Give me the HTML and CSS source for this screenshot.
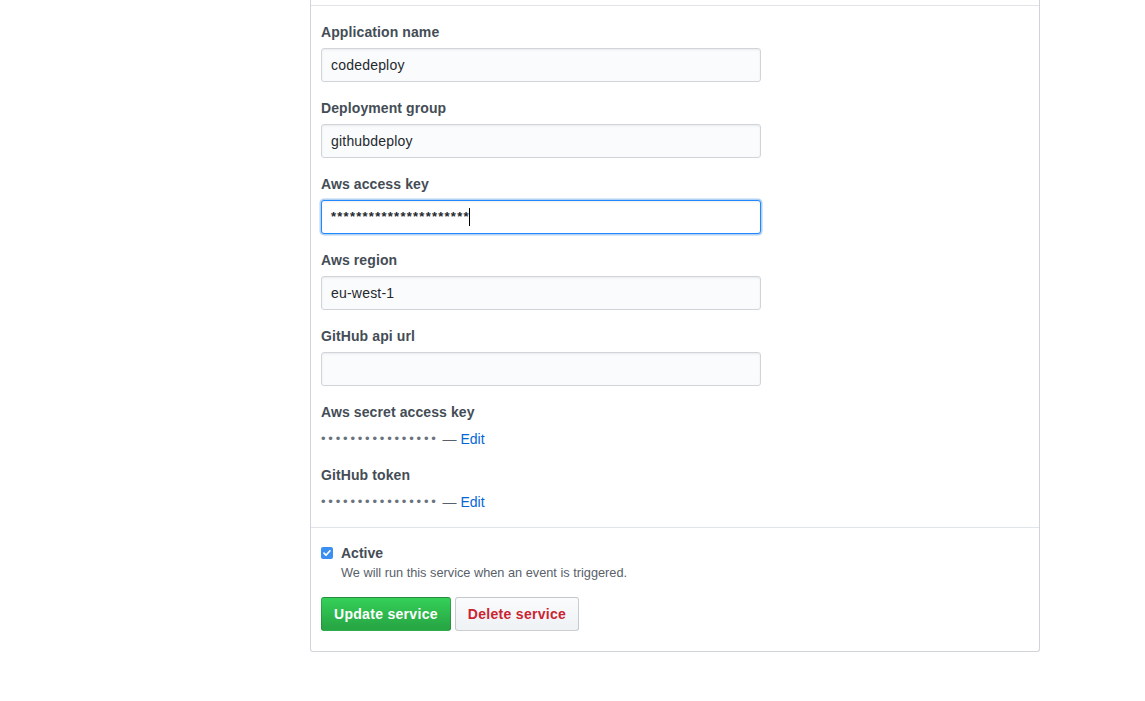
FILE: index.html
```html
<!DOCTYPE html>
<html>
<head>
<meta charset="utf-8">
<link rel="stylesheet" href="styles.css">
</head>
<body>
<div class="page">
  <div class="box">
    <div class="box-top"></div>
    <div class="section fields">
      <div class="group">
        <label class="label">Application name</label>
        <input class="input" type="text" value="codedeploy">
      </div>
      <div class="group">
        <label class="label">Deployment group</label>
        <input class="input" type="text" value="githubdeploy">
      </div>
      <div class="group">
        <label class="label">Aws access key</label>
        <div class="input focused"><span class="stars">**********************</span><span class="caret"></span></div>
      </div>
      <div class="group">
        <label class="label">Aws region</label>
        <input class="input" type="text" value="eu-west-1">
      </div>
      <div class="group">
        <label class="label">GitHub api url</label>
        <input class="input" type="text" value="">
      </div>
      <div class="group">
        <label class="label">Aws secret access key</label>
        <div class="secret"><span class="dots">••••••••••••••••</span> — <a class="edit" href="#">Edit</a></div>
      </div>
      <div class="group">
        <label class="label">GitHub token</label>
        <div class="secret"><span class="dots">••••••••••••••••</span> — <a class="edit" href="#">Edit</a></div>
      </div>
    </div>
    <div class="section footer">
      <div class="check-row">
        <span class="checkbox"><svg viewBox="0 0 12 12" width="12" height="12"><path d="M3 6.2l2 2 4-4.4" fill="none" stroke="#fff" stroke-width="1.7" stroke-linecap="round" stroke-linejoin="round"/></svg></span>
        <div class="check-text">
          <div class="check-label">Active</div>
          <div class="note">We will run this service when an event is triggered.</div>
        </div>
      </div>
      <div class="actions">
        <button class="btn btn-primary">Update service</button>
        <button class="btn btn-danger">Delete service</button>
      </div>
    </div>
  </div>
</div>
</body>
</html>
```
FILE: styles.css
```css
html, body {
  margin: 0;
  padding: 0;
  background: #fff;
}
body {
  font-family: "Liberation Sans", Arial, Helvetica, sans-serif;
  font-size: 14px;
  color: #24292e;
}
.page {
  padding-left: 310px;
}
.box {
  width: 728px;
  border: 1px solid #d1d5da;
  border-top: none;
  border-radius: 0 0 3px 3px;
}
.box-top {
  height: 5px;
}
.section {
  border-top: 1px solid #e1e4e8;
  padding: 0 10px;
}
.fields {
  padding-top: 16px;
  padding-bottom: 15px;
}
.group + .group {
  margin-top: 16px;
}
.label {
  display: block;
  font-weight: bold;
  line-height: 20px;
  color: #444d56;
  margin-bottom: 6px;
  letter-spacing: 0.1px;
}
.input {
  display: block;
  box-sizing: border-box;
  width: 440px;
  height: 34px;
  padding: 0 9px;
  font-family: inherit;
  font-size: 14px;
  line-height: 32px;
  color: #24292e;
  background: #fafbfc;
  border: 1px solid #d1d5da;
  border-radius: 3px;
  box-shadow: inset 0 1px 2px rgba(27, 31, 35, 0.075);
  outline: none;
  margin: 0;
  letter-spacing: 0.2px;
}
.input.focused {
  background: #fff;
  border-color: #2188ff;
  box-shadow: inset 0 1px 2px rgba(27, 31, 35, 0.075), 0 0 0 1.5px rgba(3, 102, 214, 0.3);
  display: flex;
  align-items: center;
}
.stars {
  letter-spacing: 1.25px;
  font-size: 13px;
  font-weight: bold;
  color: #24292e;
}
.caret {
  display: inline-block;
  width: 1px;
  height: 18px;
  background: #000;
  margin-left: -1px;
}
.secret {
  height: 20px;
  line-height: 20px;
  color: #586069;
  margin-top: 7px;
}
.dots {
  display: inline-block;
  line-height: 20px;
  vertical-align: top;
  letter-spacing: 2.8px;
  font-size: 13px;
  color: #6a737d;
}
.edit {
  color: #0366d6;
  text-decoration: none;
}
.footer {
  padding-top: 15px;
  padding-bottom: 20px;
}
.check-row {
  display: flex;
  align-items: flex-start;
  gap: 8px;
}
.checkbox {
  width: 12px;
  height: 12px;
  margin-top: 4px;
  border-radius: 2px;
  background: #3b8ff0;
  display: flex;
}
.check-label {
  font-weight: bold;
  line-height: 20px;
  color: #444d56;
}
.note {
  font-size: 12.75px;
  line-height: 20px;
  color: #586069;
}
.actions {
  display: flex;
  gap: 4px;
  margin-top: 14px;
}
.btn {
  box-sizing: border-box;
  height: 34px;
  padding: 0 12px;
  font-family: inherit;
  font-size: 14px;
  font-weight: bold;
  letter-spacing: 0.3px;
  border: 1px solid rgba(27, 31, 35, 0.2);
  border-radius: 3px;
  cursor: pointer;
}
.btn-primary {
  color: #fff;
  background-image: linear-gradient(-180deg, #34d058 0%, #28a745 90%);
}
.btn-danger {
  color: #cb2431;
  background-image: linear-gradient(-180deg, #fafbfc 0%, #eff3f6 90%);
}
```
